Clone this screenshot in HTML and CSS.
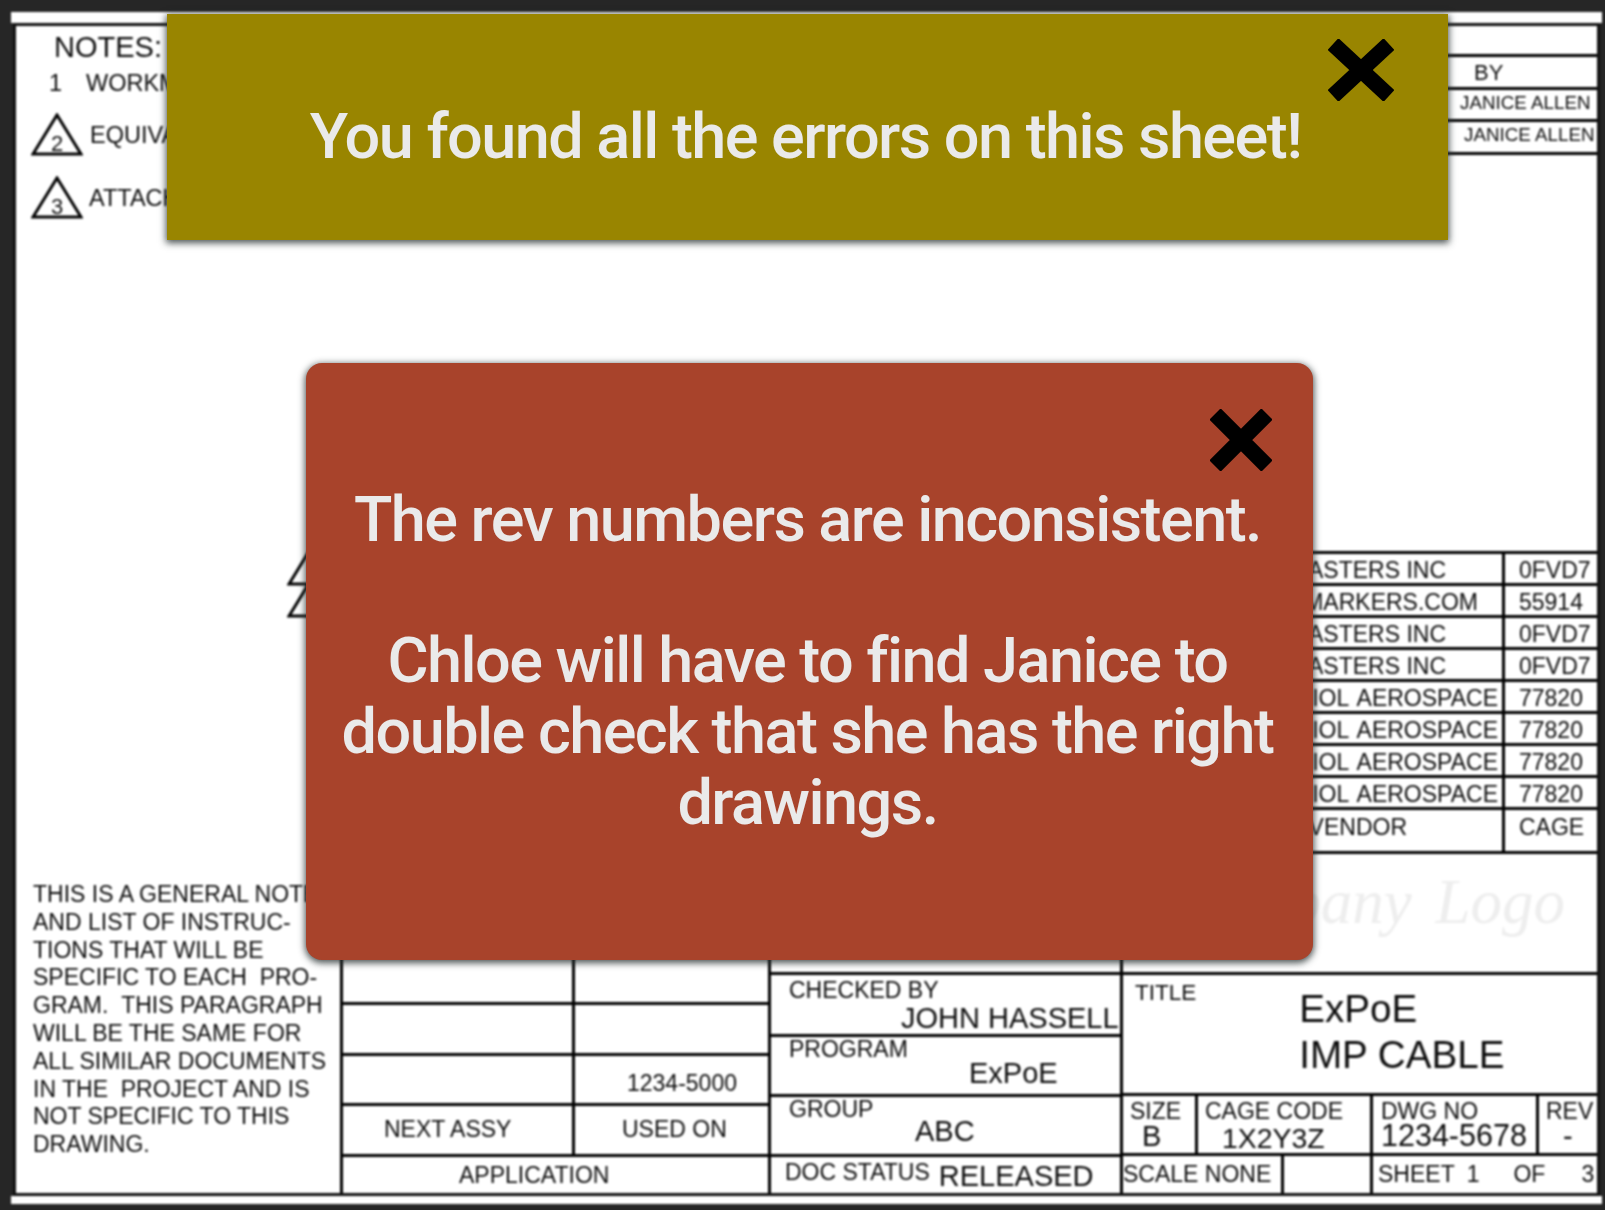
FILE: index.html

```html
<!DOCTYPE html>
<html lang="en">
<head>
  <meta charset="UTF-8">
  <title>Find the errors</title>
  <link rel="stylesheet" href="styles.css">
</head>
<body>

  <div class="sheet">
    <div class="strip strip-top"></div>

    <div class="frame">
      <div class="left-col">
        <div class="notes">
          <div class="notes-title">NOTES:</div>
          <div class="note note-1"><span class="note-num">1</span>WORKMANSHIP</div>
          <div class="note note-2">
            <svg class="flag" viewBox="0 0 52 44"><polygon points="26,2 50,41 2,41"/><text x="26" y="38">2</text></svg>
            EQUIVALENT
          </div>
          <div class="note note-3">
            <svg class="flag" viewBox="0 0 52 44"><polygon points="26,2 50,41 2,41"/><text x="26" y="38">3</text></svg>
            ATTACH
          </div>
        </div>
        <p class="general">THIS IS A GENERAL NOTE<br>AND LIST OF INSTRUC-<br>TIONS THAT WILL BE<br>SPECIFIC TO EACH &nbsp;PRO-<br>GRAM. &nbsp;THIS PARAGRAPH<br>WILL BE THE SAME FOR<br>ALL SIMILAR DOCUMENTS<br>IN THE &nbsp;PROJECT AND IS<br>NOT SPECIFIC TO THIS<br>DRAWING.</p>
      </div>

      <div class="right-col">
        <div class="rev">
          <div class="rev-row"></div>
          <div class="rev-row rev-by">BY</div>
          <div class="rev-row rev-a">JANICE ALLEN</div>
          <div class="rev-row rev-b">JANICE ALLEN</div>
        </div>

        <div class="vendors">
          <div class="v-row"><span class="v-name v-fast">FASTERS INC</span><span class="v-code">0FVD7</span></div>
          <div class="v-row"><span class="v-name v-mark">MARKERS.COM</span><span class="v-code">55914</span></div>
          <div class="v-row"><span class="v-name v-fast">FASTERS INC</span><span class="v-code">0FVD7</span></div>
          <div class="v-row"><span class="v-name v-fast">FASTERS INC</span><span class="v-code">0FVD7</span></div>
          <div class="v-row"><span class="v-name v-aero">RADIOL AEROSPACE</span><span class="v-code">77820</span></div>
          <div class="v-row"><span class="v-name v-aero">RADIOL AEROSPACE</span><span class="v-code">77820</span></div>
          <div class="v-row"><span class="v-name v-aero">RADIOL AEROSPACE</span><span class="v-code">77820</span></div>
          <div class="v-row"><span class="v-name v-aero">RADIOL AEROSPACE</span><span class="v-code">77820</span></div>
          <div class="v-row v-head"><span class="v-name v-vend">VENDOR</span><span class="v-code">CAGE</span></div>
        </div>

        <div class="logo">Company Logo</div>

        <div class="block">
          <div class="b-left">
            <div class="cell"></div><div class="cell"></div>
            <div class="cell"></div><div class="cell"></div>
            <div class="cell"></div><div class="cell cell-num">1234-5000</div>
            <div class="cell cell-next">NEXT ASSY</div><div class="cell cell-used">USED ON</div>
            <div class="cell cell-app">APPLICATION</div>
          </div>

          <div class="b-mid">
            <div class="m-row"></div>
            <div class="m-row m-checked"><span class="lbl">CHECKED BY</span><span class="val">JOHN HASSELL</span></div>
            <div class="m-row m-program"><span class="lbl">PROGRAM</span><span class="val">ExPoE</span></div>
            <div class="m-row m-group"><span class="lbl">GROUP</span><span class="val">ABC</span></div>
            <div class="m-row m-status"><span class="lbl">DOC STATUS</span><span class="val">RELEASED</span></div>
          </div>

          <div class="b-right">
            <div class="r-row"></div>
            <div class="r-row r-title">
              <span class="lbl">TITLE</span>
              <div class="title-text">ExPoE<br>IMP CABLE</div>
            </div>
            <div class="r-row r-dwg">
              <div class="d-cell d-size"><span class="lbl">SIZE</span><span class="val">B</span></div>
              <div class="d-cell d-cage"><span class="lbl">CAGE CODE</span><span class="val">1X2Y3Z</span></div>
              <div class="d-cell d-no"><span class="lbl">DWG NO</span><span class="val">1234-5678</span></div>
              <div class="d-cell d-rev"><span class="lbl">REV</span><span class="val">-</span></div>
            </div>
            <div class="r-row r-scale">
              <div class="s-cell s-scale">SCALE NONE</div>
              <div class="s-cell s-blank"></div>
              <div class="s-cell s-sheet"><span>SHEET</span><span class="s-one">1</span><span class="s-of">OF</span><span class="s-three">3</span></div>
            </div>
          </div>
        </div>
      </div>

      <svg class="flag flag-a" viewBox="0 0 52 44"><polygon points="26,2 50,41 2,41"/></svg>
      <svg class="flag flag-b" viewBox="0 0 52 44"><polygon points="26,2 50,41 2,41"/></svg>
    </div>

    <div class="strip strip-bottom"></div>
  </div>

  <div class="banner">
    You found all the errors on this sheet!
    <svg class="close close-banner" viewBox="0 0 66 62"><path d="M5 5 L61 57 M61 5 L5 57"/></svg>
  </div>

  <div class="modal">
    <svg class="close close-modal" viewBox="0 0 62 62"><path d="M5 5 L57 57 M57 5 L5 57"/></svg>
    <p>The rev numbers are inconsistent.</p>
    <p class="modal-second">Chloe will have to find Janice to double check that she has the right drawings.</p>
  </div>

</body>
</html>
```

FILE: styles.css

```css
* {
  box-sizing: border-box;
}
html, body {
  margin: 0;
  height: 100%;
  overflow: hidden;
}
body {
  background-color: #262626;
  font-family: "Liberation Sans", Arial, sans-serif;
  color: #0c0c0c;
}

/* the drawing sheet behind the popups */
.sheet {
  width: 1591px;
  margin: 12px 0 0 11px;
  filter: blur(0.8px);
}
.strip {
  background: #fff;
  height: 11px;
}
.strip-bottom {
  height: 8px;
}
.frame {
  position: relative;
  display: flex;
  height: 1173px;
  margin: 0 2px;
  background: #fff;
  border: 3px solid #111;
  font-size: 23px;
}

.left-col {
  flex: none;
  width: 324px;
  display: flex;
  flex-direction: column;
  justify-content: space-between;
  white-space: nowrap;
}
.notes {
  padding: 4px 0 0 15px;
}
.notes-title {
  padding-left: 23px;
  font-size: 29px;
  line-height: 34px;
}
.note {
  display: flex;
  align-items: center;
  font-size: 23.5px;
}
.note-1 {
  height: 26px;
  margin: 6px 0 0 18px;
}
.note-num {
  width: 37px;
}
.note-2 {
  margin-top: 17px;
  gap: 7px;
}
.note-3 {
  margin-top: 19px;
  gap: 6px;
}
.flag {
  width: 52px;
  height: 44px;
  flex: none;
}
.flag polygon {
  fill: none;
  stroke: #000;
  stroke-width: 3;
}
.flag text {
  font-size: 22px;
  text-anchor: middle;
  fill: #111;
}
.flag-a, .flag-b {
  position: absolute;
  left: 271px;
}
.flag-a { top: 517px; }
.flag-b { top: 549px; }

.general {
  margin: 0 0 34px 17px;
  line-height: 27.8px;
}

.right-col {
  flex: 1;
  min-width: 0;
  display: flex;
  flex-direction: column;
  align-items: flex-end;
  white-space: nowrap;
}

/* revision table, top right */
.rev {
  width: 170px;
}
.rev-row {
  height: 33px;
  border-bottom: 3px solid #000;
  display: flex;
  align-items: flex-end;
  padding-bottom: 3px;
}
.rev-row:first-child {
  height: 31px;
}
.rev-by {
  padding-left: 47px;
  padding-bottom: 1px;
  font-size: 22px;
}
.rev-a {
  height: 32px;
  padding-left: 33px;
  padding-bottom: 5px;
  font-size: 18.8px;
}
.rev-b {
  padding-left: 37px;
  padding-bottom: 6px;
  font-size: 18.8px;
}

/* vendor list */
.vendors {
  width: 700px;
  margin-top: 396px;
  border-top: 3px solid #000;
}
.v-row {
  display: flex;
  height: 32px;
  border-bottom: 3px solid #000;
  align-items: center;
}
.v-name {
  flex: 1;
  height: 100%;
  padding-top: 3px;
  display: flex;
  align-items: center;
  justify-content: flex-end;
  border-right: 3px solid #000;
}
.v-fast { padding-right: 56px; }
.v-mark { padding-right: 24px; }
.v-aero {
  padding-right: 4px;
  word-spacing: 3px;
}
.v-vend { padding-right: 95px; }
.v-code {
  width: 92px;
  padding-left: 14px;
  padding-top: 3px;
  height: 100%;
  display: flex;
  align-items: center;
}
.v-head {
  height: 44px;
}
.v-head span {
  align-items: flex-start;
  padding-top: 4px;
}

.logo {
  margin: 13px 32px 0 0;
  font-family: "Liberation Serif", serif;
  font-style: italic;
  font-size: 63px;
  line-height: 70px;
  word-spacing: 8px;
  color: #eeeeee;
}

/* title block */
.block {
  margin-top: auto;
  width: 100%;
  display: flex;
  height: 243px;
}
.b-left {
  width: 431px;
  border-left: 3px solid #000;
  border-right: 3px solid #000;
  display: grid;
  grid-template-columns: 232px 1fr;
  grid-template-rows: 55px 51px 50px 51px 1fr;
}
.cell {
  display: flex;
  align-items: center;
  border-bottom: 3px solid #000;
}
.cell:nth-child(odd) {
  border-right: 3px solid #000;
}
.cell-num {
  padding: 8px 0 0 52px;
}
.cell-next {
  padding: 0 0 2px 41px;
}
.cell-used {
  padding: 0 0 2px 47px;
}
.cell-app {
  grid-column: 1 / 3;
  padding-left: 116px;
  border: 0 !important;
}
.b-mid {
  flex: none;
  width: 352px;
  display: flex;
  flex-direction: column;
  border-right: 3px solid #000;
}
.m-row {
  border-bottom: 3px solid #000;
  padding-left: 18px;
  display: flex;
  flex-direction: column;
  line-height: 25px;
}
.m-row .val {
  font-size: 29px;
  line-height: 32px;
}
.m-row:first-child { height: 25px; }
.m-checked {
  height: 62px;
  padding-top: 3px;
}
.m-program { height: 60px; }
.m-group { height: 60px; }
.m-status {
  flex: 1;
  flex-direction: row;
  border: 0;
  padding-left: 14px;
  gap: 9px;
  align-items: center;
}
.m-status .lbl {
  margin-top: -6px;
}
.m-status .val {
  padding-top: 1px;
}
.m-checked .val {
  margin: -1px 0 0 112px;
}
.m-program .val {
  margin: -5px 0 0 180px;
}
.m-group .val {
  margin: -7px 0 0 126px;
}

.b-right {
  flex: 1;
  min-width: 0;
  display: flex;
  flex-direction: column;
}
.r-row {
  border-bottom: 3px solid #000;
}
.r-row:first-child { height: 25px; }
.r-title {
  height: 121px;
  display: flex;
  padding-left: 12px;
}
.r-title .lbl {
  padding-top: 5px;
  font-size: 22.5px;
}
.title-text {
  margin-left: 103px;
  padding-top: 11px;
  font-size: 38.6px;
  line-height: 46px;
}
.r-dwg {
  height: 60px;
  display: flex;
}
.d-cell {
  display: flex;
  flex-direction: column;
  line-height: 24px;
  border-right: 3px solid #000;
  padding: 3px 0 0 7px;
}
.d-cell .val {
  font-size: 29px;
  line-height: 26px;
}
.d-size { width: 75px; }
.d-size .val { margin-left: 12px; }
.d-cage { width: 175px; }
.d-cage .val {
  margin: 2px 0 0 17px;
  font-size: 28.4px;
}
.d-no {
  width: 166px;
  padding-left: 8px;
}
.d-no .val {
  margin-top: -1px;
  font-size: 30.5px;
}
.d-rev {
  flex: 1;
  border: 0;
}
.d-rev .val { margin-left: 17px; }
.r-scale {
  flex: 1;
  display: flex;
  border: 0;
}
.s-cell {
  display: flex;
  align-items: center;
  border-right: 3px solid #000;
}
.s-scale { width: 161px; }
.s-blank { width: 89px; }
.s-sheet {
  flex: 1;
  border: 0;
  padding-left: 5px;
}
.s-one { margin-left: 12px; }
.s-of { margin-left: 34px; }
.s-three { margin-left: 36px; }

/* popups */
.banner, .modal {
  position: absolute;
  font-family: Roboto, sans-serif;
  font-weight: 500;
  font-size: 63px;
  letter-spacing: -1.55px;
  color: #eaeaea;
  text-align: center;
  filter: blur(0.6px);
  box-shadow: 0 2px 7px 1px rgba(30, 40, 40, 0.8);
}
.banner {
  left: 167px;
  top: 14px;
  width: 1281px;
  height: 226px;
  padding: 86px 4px 0 0;
  background-color: #998500;
  line-height: 74px;
}
.modal {
  left: 306px;
  top: 363px;
  width: 1007px;
  height: 597px;
  padding: 121px 24px 0 20px;
  background-color: #a8432b;
  border-radius: 16px;
  line-height: 71px;
}
.modal p {
  margin: 0;
}
.modal-second {
  padding-top: 70px;
}
.close {
  position: absolute;
}
.close path {
  fill: none;
  stroke: #000;
  stroke-width: 16;
}
.close-banner {
  left: 1161px;
  top: 25px;
  width: 66px;
  height: 62px;
}
.close-modal {
  left: 904px;
  top: 46px;
  width: 62px;
  height: 62px;
}
```
